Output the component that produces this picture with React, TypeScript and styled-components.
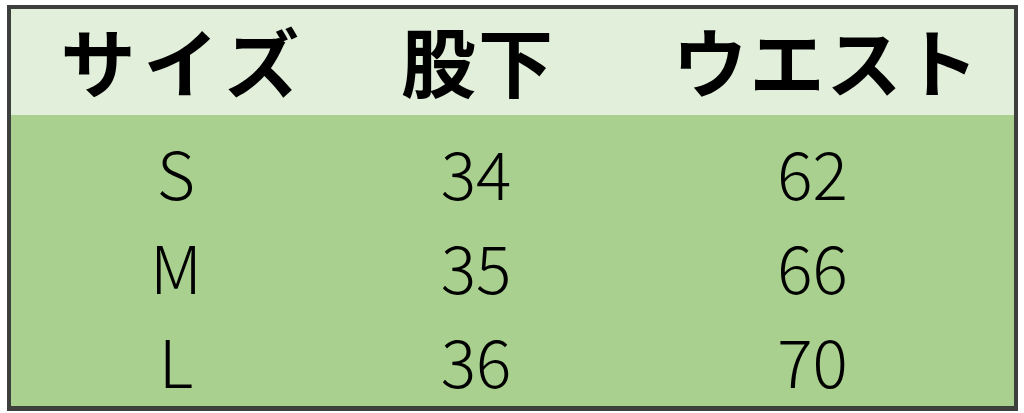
import styled, { createGlobalStyle } from "styled-components";

const GlobalStyle = createGlobalStyle`
html, body {
    margin: 0;
    padding: 0;
    background: #ffffff;
}
`;

const Sheet = styled.div`
width: 1024px;
height: 413px;
box-sizing: border-box;
padding: 5px 6px 0 7px;
background-color: #ffffff;
`;

const Table = styled.div`
display: grid;
grid-template-columns: 330px 270px 1fr;
border: 4px solid #3d3f3c;
border-bottom-width: 5px;
font-family: "Noto Sans CJK JP", "Noto Sans", sans-serif;
color: #000000;
`;

const HeadCell = styled.div<{ $spacing: number; $shift: number }>`
height: 106px;
box-sizing: border-box;
padding-bottom: 6px;
padding-left: ${({ $shift }) => $shift}px;
display: flex;
align-items: center;
justify-content: center;
background-color: #e2efda;
font-size: 75px;
font-weight: 700;
letter-spacing: ${({ $spacing }) => $spacing}px;
`;

const BodyCell = styled.div<{ $first?: boolean }>`
height: ${({ $first }) => ($first ? "103px" : "94px")};
padding-top: ${({ $first }) => ($first ? "9px" : "0")};
box-sizing: border-box;
display: flex;
align-items: center;
justify-content: center;
background-color: #a9d08e;
font-size: 66px;
font-weight: 300;
`;

const headers = [
    { label: "サイズ", spacing: 8, shift: 16 },
    { label: "股下", spacing: 2, shift: 4 },
    { label: "ウエスト", spacing: 2, shift: 28 },
];

const rows = [
    ["S", "34", "62"],
    ["M", "35", "66"],
    ["L", "36", "70"],
];

export const App = () => {
    return (
        <>
            <GlobalStyle />
            <Sheet>
                <Table>
                    {headers.map((h) => (
                        <HeadCell key={h.label} $spacing={h.spacing} $shift={h.shift}>
                            {h.label}
                        </HeadCell>
                    ))}
                    {rows.map((row, i) =>
                        row.map((value, j) => (
                            <BodyCell key={`${i}-${j}`} $first={i === 0}>
                                {value}
                            </BodyCell>
                        ))
                    )}
                </Table>
            </Sheet>
        </>
    );
};

export default App;
